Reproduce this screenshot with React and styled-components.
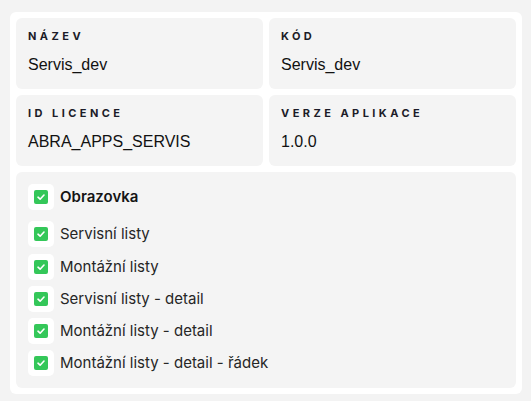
import React from 'react';
import styled, { createGlobalStyle } from 'styled-components';

const GlobalStyle = createGlobalStyle`
  html, body {
    margin: 0;
    padding: 0;
    background: #f3f3f3;
  }
`;

const Page = styled.div`
  padding: 12px 9px 8px 10px;
`;

const Panel = styled.div`
  display: flex;
  flex-direction: column;
  gap: 6px;
  padding: 6px;
  background: #ffffff;
  border-radius: 6px;
`;

const InfoGrid = styled.div`
  display: grid;
  grid-template-columns: 1fr 1fr;
  gap: 6px;
`;

const InfoCard = styled.div`
  height: 71px;
  box-sizing: border-box;
  padding: 11px 12px 0 12px;
  background: #f4f4f4;
  border-radius: 6px;
`;

const InfoLabel = styled.div`
  font-family: Inter, "Noto Sans", sans-serif;
  font-size: 11px;
  font-weight: 700;
  letter-spacing: 3.45px;
  line-height: 14px;
  color: #1c1c28;
  text-transform: uppercase;
`;

const InfoValue = styled.div`
  margin-top: 12px;
  font-family: "Liberation Sans", Arial, sans-serif;
  font-size: 16px;
  line-height: 20px;
  color: #111111;
`;

const ScreenCard = styled.div`
  display: flex;
  flex-direction: column;
  gap: 6.25px;
  padding: 12px 12px 12px 12px;
  background: #f4f4f4;
  border-radius: 6px;
`;

const CheckRow = styled.div`
  display: flex;
  align-items: center;
  gap: 6px;
  margin-bottom: ${(p) => (p.$head ? '5px' : '0')};
`;

const CheckBox = styled.span`
  display: flex;
  align-items: center;
  justify-content: center;
  width: 26px;
  height: 26px;
  background: #ffffff;
  border-radius: 5px;
  flex: none;
`;

const CheckMark = styled.span`
  display: flex;
  align-items: center;
  justify-content: center;
  width: 14px;
  height: 14px;
  background: #34c759;
  border-radius: 2px;
`;

const CheckText = styled.span`
  font-family: Inter, "Noto Sans", sans-serif;
  font-size: 15px;
  font-weight: ${(p) => (p.$head ? 600 : 400)};
  color: ${(p) => (p.$head ? '#151515' : '#262626')};
  line-height: 20px;
`;

const info = [
  { label: 'Název', value: 'Servis_dev' },
  { label: 'Kód', value: 'Servis_dev' },
  { label: 'ID licence', value: 'ABRA_APPS_SERVIS' },
  { label: 'Verze aplikace', value: '1.0.0' },
];

const screens = [
  'Servisní listy',
  'Montážní listy',
  'Servisní listy - detail',
  'Montážní listy - detail',
  'Montážní listy - detail - řádek',
];

function Check() {
  return (
    <CheckBox>
      <CheckMark>
        <svg width="10" height="10" viewBox="0 0 10 10">
          <path d="M2 5.2 L4.1 7.2 L8 3" fill="none" stroke="#ffffff" strokeWidth="1.6" strokeLinecap="round" strokeLinejoin="round" />
        </svg>
      </CheckMark>
    </CheckBox>
  );
}

export default function App() {
  return (
    <Page>
      <GlobalStyle />
      <Panel>
        {/* APP INFO */}
        <InfoGrid>
          {info.map((item) => (
            <InfoCard key={item.label}>
              <InfoLabel>{item.label}</InfoLabel>
              <InfoValue>{item.value}</InfoValue>
            </InfoCard>
          ))}
        </InfoGrid>

        {/* SCREENS */}
        <ScreenCard>
          <CheckRow $head>
            <Check />
            <CheckText $head>Obrazovka</CheckText>
          </CheckRow>
          {screens.map((name) => (
            <CheckRow key={name}>
              <Check />
              <CheckText>{name}</CheckText>
            </CheckRow>
          ))}
        </ScreenCard>
      </Panel>
    </Page>
  );
}
